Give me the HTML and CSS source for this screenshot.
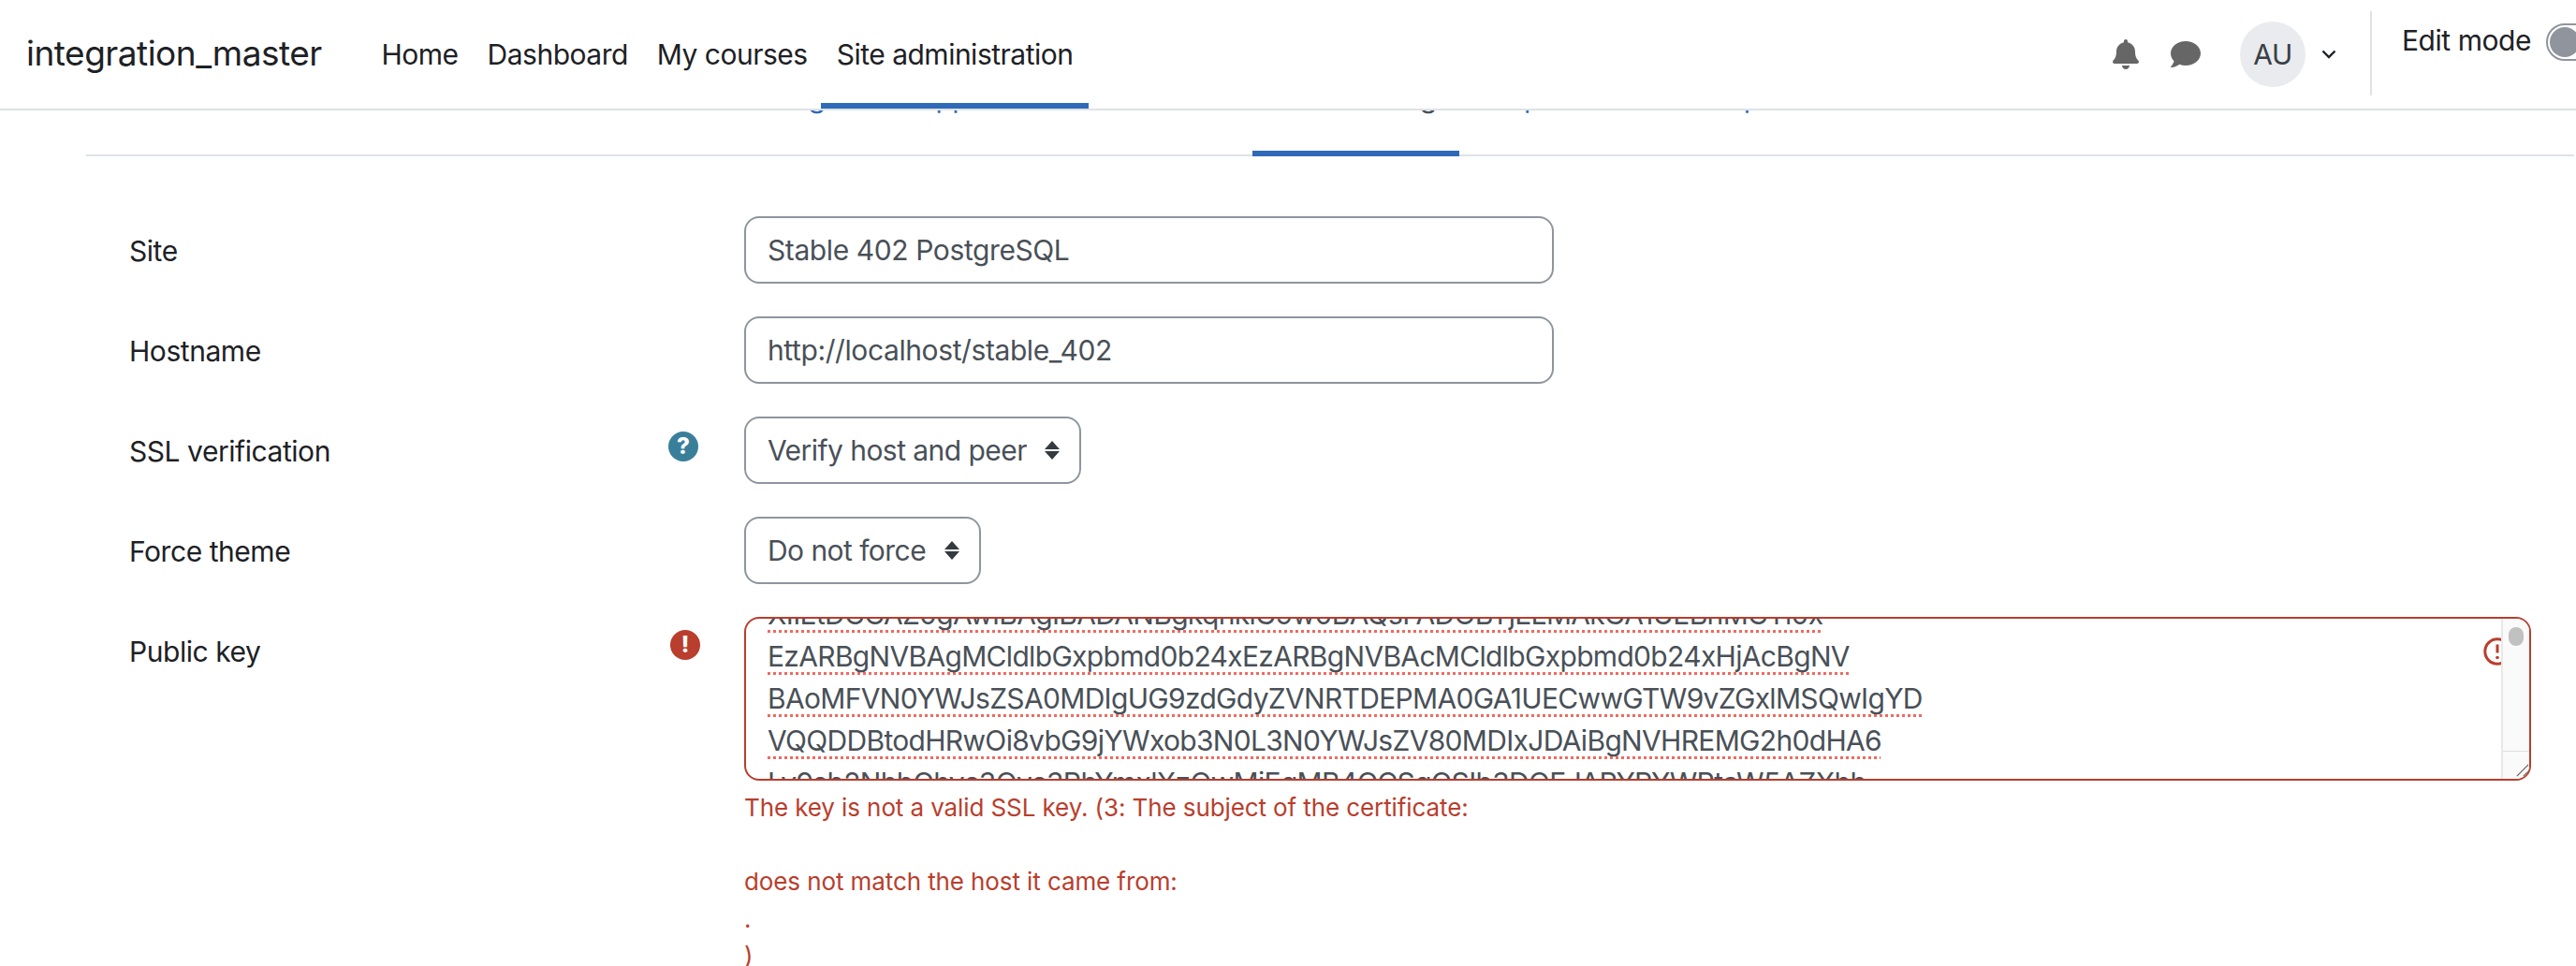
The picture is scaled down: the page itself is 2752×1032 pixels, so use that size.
FILE: index.html
```html
<!DOCTYPE html>
<html lang="en">
<head>
<meta charset="utf-8">
<title>Site settings</title>
<link rel="stylesheet" href="styles.css">
</head>
<body>
<header class="navbar">
  <a class="brand">integration_master</a>
  <nav class="primary">
    <a class="primary-link">Home</a>
    <a class="primary-link">Dashboard</a>
    <a class="primary-link">My courses</a>
    <a class="primary-link active">Site administration</a>
  </nav>
  <div class="usernav">
    <svg class="nav-icon bell" viewBox="0 0 448 512"><path d="M224 512c35.32 0 63.97-28.65 63.97-64H160.03c0 35.35 28.65 64 63.97 64zm215.39-149.71c-19.32-20.76-55.47-51.99-55.47-154.29 0-77.7-54.48-139.9-127.94-155.16V32c0-17.67-14.32-32-31.98-32s-31.98 14.33-31.98 32v20.84C118.56 68.1 64.08 130.3 64.08 208c0 102.3-36.15 133.53-55.47 154.29-6 6.45-8.66 14.16-8.61 21.71.11 16.4 12.98 32 32.1 32h383.8c19.12 0 32-15.6 32.1-32 .05-7.55-2.61-15.27-8.61-21.71z"/></svg>
    <svg class="nav-icon chat" viewBox="0 0 512 512"><path d="M256 32C114.6 32 0 125.1 0 240c0 49.6 21.4 95 57 130.7C44.5 421.1 2.7 466 2.2 466.5c-2.2 2.3-2.8 5.7-1.5 8.7S4.8 480 8 480c66.3 0 116-31.8 141.6-51.4 32.7 12.3 69 19.4 106.4 19.4 141.4 0 256-93.1 256-208S397.4 32 256 32z"/></svg>
    <span class="avatar">AU</span>
    <svg class="chevron" viewBox="0 0 16 10"><path d="M1.5 1.5 8 8l6.5-6.5"/></svg>
    <span class="divider"></span>
    <span class="editmode">Edit mode</span>
    <span class="toggle"><span class="knob"></span></span>
  </div>
</header>

<main class="page">
  <div class="tabs">
    <a class="tab">Registered apps</a>
    <a class="tab current">Site listing</a>
    <a class="tab import">Import</a>
    <a class="tab export">Export</a>
  </div>

  <form class="form">
    <div class="row">
      <label class="label">Site</label>
      <div class="hint"></div>
      <input class="field text" value="Stable 402 PostgreSQL">
    </div>
    <div class="row">
      <label class="label">Hostname</label>
      <div class="hint"></div>
      <input class="field text" value="http://localhost/stable_402">
    </div>
    <div class="row">
      <label class="label">SSL verification</label>
      <div class="hint">
        <span class="badge help">?</span>
      </div>
      <select class="field choice"><option>Verify host and peer</option></select>
    </div>
    <div class="row">
      <label class="label">Force theme</label>
      <div class="hint"></div>
      <select class="field choice"><option>Do not force</option></select>
    </div>
    <div class="row">
      <label class="label">Public key</label>
      <div class="hint">
        <span class="badge error">!</span>
      </div>
      <div class="keycol">
        <div class="keybox">
          <div class="keytext">
            <div class="keyline">XIIEtDCCAZ0gAwIBAgIBADANBgkqhkiG9w0BAQsFADOBTjELMAkGA1UEBhMCTl0x</div>
            <div class="keyline">EzARBgNVBAgMCldlbGxpbmd0b24xEzARBgNVBAcMCldlbGxpbmd0b24xHjAcBgNV</div>
            <div class="keyline">BAoMFVN0YWJsZSA0MDIgUG9zdGdyZVNRTDEPMA0GA1UECwwGTW9vZGxlMSQwIgYD</div>
            <div class="keyline">VQQDDBtodHRwOi8vbG9jYWxob3N0L3N0YWJsZV80MDIxJDAiBgNVHREMG2h0dHA6</div>
            <div class="keyline">Ly9sb2NhbGhvc3Qvc3RhYmxlXzQwMjEgMB4GCSqGSIb3DQEJARYRYWRtaW5AZXhh</div>
          </div>
          <svg class="keyalert" viewBox="0 0 30 30"><circle cx="15" cy="15" r="13.2"/><path d="M15 7.5v9"/><circle class="dot" cx="15" cy="21.5" r="1.8"/></svg>
          <div class="scrollbar">
            <span class="thumb"></span>
            <span class="resizer">
              <svg class="grip" viewBox="0 0 16 16"><path d="M1 15 15 1M9 15l6-6"/></svg>
            </span>
          </div>
        </div>
        <div class="feedback">The key is not a valid SSL key. (3: The subject of the certificate:<br><br>does not match the host it came from:<br>.<br>)</div>
      </div>
    </div>
  </form>
</main>
</body>
</html>
```
FILE: styles.css
```css
* { box-sizing: border-box; }
html, body { margin: 0; height: 100%; overflow: hidden; background: #fff; }
body { font-family: Inter, "Liberation Sans", sans-serif; font-size: 30px; line-height: 45px; letter-spacing: -0.45px; color: #1d2125; }

.navbar { position: fixed; top: 0; left: 0; width: 2752px; height: 118px; display: flex; align-items: stretch; background: #fff; border-bottom: 2px solid #dee2e6; z-index: 10; padding-left: 28px; overflow: hidden; }
.brand { font-size: 37px; letter-spacing: -0.5px; display: flex; align-items: center; margin-top: -4px; width: 364px; flex: none; }
.primary { display: flex; flex: none; letter-spacing: -0.5px; }
.primary-link { display: flex; align-items: center; padding: 6px 15.5px 0; border-bottom: 6px solid transparent; height: 116px; }
.primary-link.active { border-bottom-color: #2f6ab9; padding-left: 16.5px; padding-right: 16.5px; margin-left: -1px; }

.usernav { margin-left: auto; display: flex; align-items: center; flex: none; width: 523px; height: 116px; }
.nav-icon { fill: #666; flex: none; }
.bell { width: 28px; height: 32px; margin-left: 28px; }
.chat { width: 32px; height: 32px; margin-left: 34px; }
.avatar { width: 70px; height: 70px; border-radius: 50%; background: #e9ebef; color: #3a4046; display: flex; align-items: center; justify-content: center; margin-left: 42px; flex: none; }
.chevron { width: 16px; height: 10px; margin-left: 17px; fill: none; stroke: #1d2125; stroke-width: 2.4; flex: none; }
.divider { width: 2px; height: 90px; background: #dee2e6; margin-left: 36px; margin-top: -3px; flex: none; }
.editmode { margin-left: 32px; flex: none; margin-top: -30px; }
.toggle { width: 60px; height: 40px; margin-left: 16px; margin-top: -26px; border: 2px solid #8f959e; border-radius: 20px; padding: 2px; flex: none; }
.knob { display: block; width: 32px; height: 32px; border-radius: 50%; background: #90949c; }

.page { padding-top: 44px; margin-left: 92px; width: 2658px; }
.tabs { display: flex; border-bottom: 2px solid #dee2e6; height: 123px; padding-left: 704px; align-items: flex-end; }
.tab { color: #2f6ab9; padding: 0 32px; height: 85px; margin-bottom: -2px; white-space: nowrap; flex: none; }
.tab.current { color: #495057; border-bottom: 6px solid #2f6ab9; width: 221px; margin-left: 255px; padding: 0 24px 0 0; text-align: right; }
.tab.import { padding-left: 36px; }
.tab.export { margin-left: 81px; }

.form { padding-top: 64px; padding-left: 46px; display: flex; flex-direction: column; gap: 35px; }
.row { display: grid; grid-template-columns: 578px 79px auto; justify-content: start; align-items: start; }
.label { padding-top: 15px; white-space: nowrap; }
.hint { padding-top: 16px; height: 72px; }
.badge { display: flex; width: 32px; height: 32px; border-radius: 50%; align-items: center; justify-content: center; color: #fff; font-size: 24px; font-weight: 800; line-height: 32px; letter-spacing: 0; }
.help { background: #3a7f9a; margin-left: -2px; }
.error { background: #b93e2d; margin-top: -2px; }

.field { font: inherit; letter-spacing: -0.4px; color: #495057; background: #fff; border: 2px solid #8f959e; border-radius: 16px; height: 72px; padding: 0 23px; outline: none; }
.text { width: 865px; }
.choice { appearance: none; -webkit-appearance: none; letter-spacing: -0.55px; padding-right: 56px; background-image: url("data:image/svg+xml,%3Csvg xmlns='http://www.w3.org/2000/svg' width='16' height='20'%3E%3Cpath fill='%23343a40' d='M8 0l8 9H0zM8 20l8-9H0z'/%3E%3C/svg%3E"); background-repeat: no-repeat; background-position: right 21px center; background-size: 16px 20px; }

.keycol { width: 1909px; }
.keybox { position: relative; height: 175px; border: 2px solid #b93e2d; border-radius: 16px; overflow: hidden; }
.keytext { margin-top: -27px; padding-left: 23px; color: #495057; white-space: nowrap; letter-spacing: -0.68px; }
.keyline { text-decoration: underline dotted #ef6a5f 3px; text-underline-offset: 6px; text-decoration-skip-ink: none; }
.keyalert { position: absolute; left: 1856px; top: 20px; width: 30px; height: 30px; fill: none; stroke: #b93e2d; stroke-width: 3; }
.keyalert .dot { fill: #b93e2d; stroke: none; }
.scrollbar { position: absolute; top: 0; right: 0; width: 30px; height: 100%; background: #fafafa; border-left: 2px solid #e8e8e8; }
.thumb { display: block; width: 16px; height: 20px; margin: 9px 0 0 6px; border-radius: 8px; background: #c1c1c1; }
.resizer { position: absolute; left: 0; bottom: 0; width: 30px; height: 30px; border-top: 1px solid #dedede; }
.grip { position: absolute; right: 2px; bottom: 2px; width: 14px; height: 14px; fill: none; stroke: #666; stroke-width: 1.5; }
.feedback { font-size: 26px; line-height: 39.5px; letter-spacing: -0.1px; color: #b93e2d; margin-top: 9px; }
```
